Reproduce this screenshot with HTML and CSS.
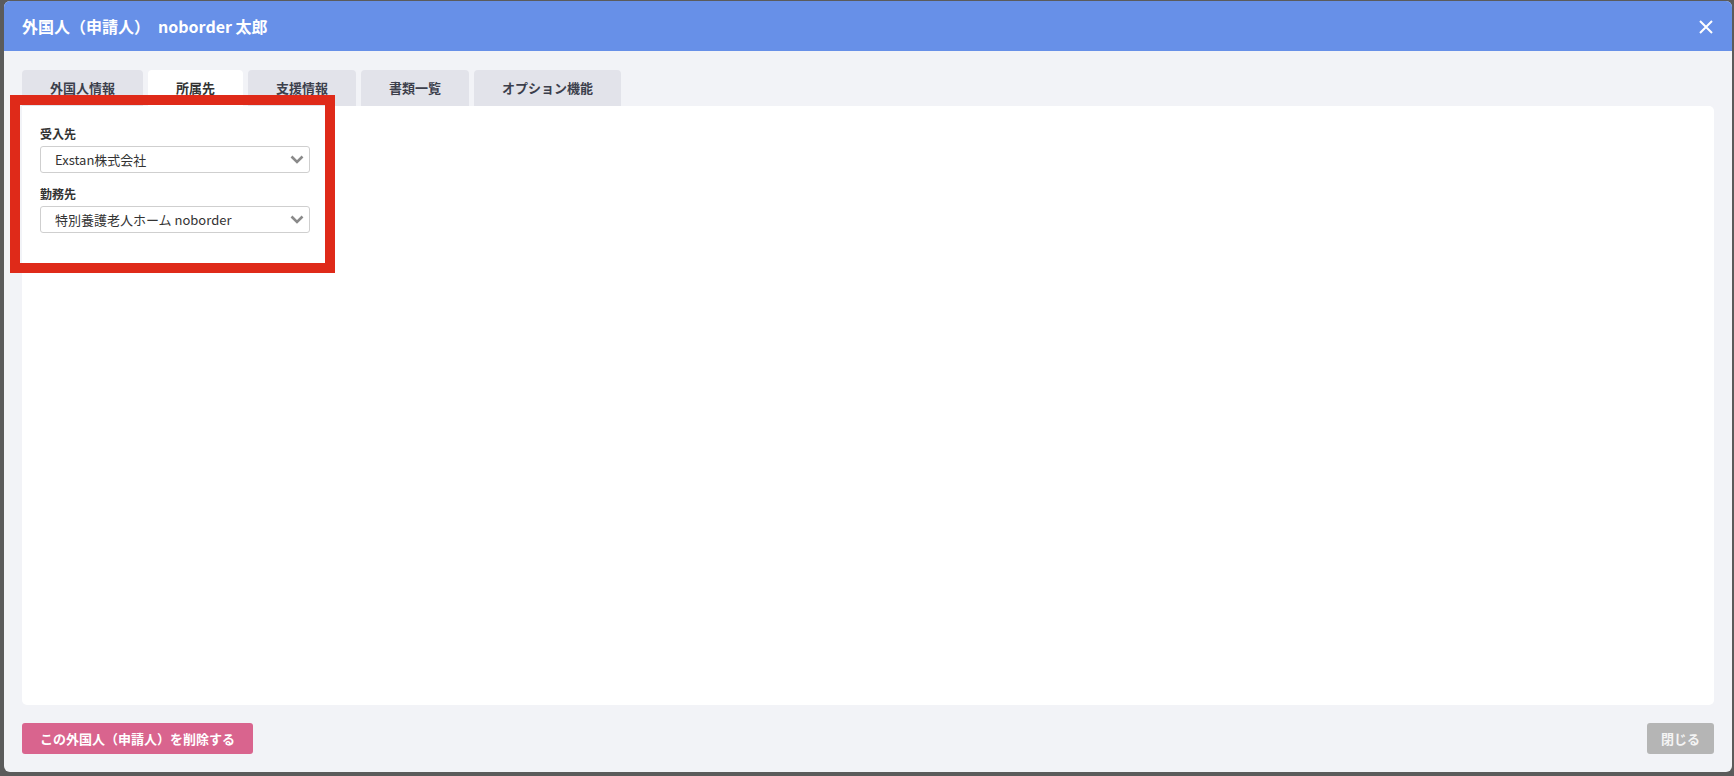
FILE: index.html
```html
<!DOCTYPE html>
<html lang="ja">
<head>
    <meta charset="UTF-8">
    <title>外国人（申請人）</title>
    <link rel="stylesheet" href="styles.css">
</head>
<body>
    <div class="modal">
        <div class="modal-header">
            <h2 class="modal-title">外国人（申請人）　noborder 太郎</h2>
            <button class="close-x" aria-label="close">
                <svg width="14" height="14" viewBox="0 0 14 14">
                    <path d="M1 1 L13 13 M13 1 L1 13" stroke="#fff" stroke-width="2" fill="none"/>
                </svg>
            </button>
        </div>

        <div class="modal-body">
            <div class="tabs">
                <div class="tab">外国人情報</div>
                <div class="tab active">所属先</div>
                <div class="tab">支援情報</div>
                <div class="tab">書類一覧</div>
                <div class="tab">オプション機能</div>
            </div>

            <div class="panel">
                <div class="field">
                    <label class="field-label">受入先</label>
                    <div class="select-box">
                        <span>Exstan株式会社</span>
                        <svg class="chevron" width="14" height="9" viewBox="0 0 14 9">
                            <path d="M1.5 1.5 L7 7 L12.5 1.5" stroke="#8a8a8a" stroke-width="2.6" fill="none"/>
                        </svg>
                    </div>
                </div>
                <div class="field">
                    <label class="field-label">勤務先</label>
                    <div class="select-box">
                        <span>特別養護老人ホーム noborder</span>
                        <svg class="chevron" width="14" height="9" viewBox="0 0 14 9">
                            <path d="M1.5 1.5 L7 7 L12.5 1.5" stroke="#8a8a8a" stroke-width="2.6" fill="none"/>
                        </svg>
                    </div>
                </div>
            </div>

            <div class="modal-footer">
                <button class="btn btn-delete">この外国人（申請人）を削除する</button>
                <button class="btn btn-close">閉じる</button>
            </div>
        </div>

        <!-- annotation box drawn over the form -->
        <div class="highlight"></div>
    </div>
</body>
</html>
```

FILE: styles.css
```css
* {
    box-sizing: border-box;
}

body {
    margin: 0;
    background-color: #5b5b5b;
    font-family: "Noto Sans CJK JP", "Noto Sans", sans-serif;
    color: #333;
}

.modal {
    position: relative;
    margin: 1px 2px 4px 4px;
    height: 771px;
    background-color: #f2f3f7;
    border-radius: 6px;
    display: flex;
    flex-direction: column;
    overflow: hidden;
}

.modal-header {
    height: 50px;
    background-color: #6790e8;
    display: flex;
    align-items: center;
    justify-content: space-between;
    padding: 0 18px 0 18px;
}

.modal-title {
    margin: 0;
    color: white;
    font-size: 16px;
    font-weight: bold;
}

.close-x {
    background: none;
    border: none;
    padding: 0;
    width: 14px;
    height: 14px;
    margin-top: 2px;
    margin-right: 1px;
}

.modal-body {
    flex: 1;
    display: flex;
    flex-direction: column;
    padding: 19px 18px 18px 18px;
}

.tabs {
    display: flex;
    gap: 5px;
    height: 36px;
}

.tab {
    background-color: #e2e3ea;
    border-radius: 4px 4px 0 0;
    padding: 0 28px;
    font-size: 13px;
    font-weight: bold;
    line-height: 36px;
    color: #3c3f4c;
}

.tab.active {
    background-color: white;
    color: #333;
}

.panel {
    flex: 1;
    background-color: white;
    border-radius: 0 5px 5px 5px;
    padding: 19px 18px;
}

.field {
    width: 270px;
    margin-bottom: 12px;
}

.field-label {
    display: block;
    font-size: 12px;
    font-weight: bold;
    line-height: 17px;
    margin-bottom: 4px;
}

.select-box {
    height: 27px;
    border: 1px solid #cfcfcf;
    border-radius: 3px;
    display: flex;
    align-items: center;
    justify-content: space-between;
    padding: 0 5px 0 14px;
    font-size: 13px;
    color: #333;
}

.chevron {
    display: block;
}

.modal-footer {
    display: flex;
    justify-content: space-between;
    margin-top: 18px;
}

.btn {
    height: 31px;
    border: none;
    border-radius: 3px;
    font-family: "Noto Sans CJK JP", "Noto Sans", sans-serif;
    font-size: 13px;
    font-weight: bold;
    color: white;
    padding: 0 18px;
}

.btn-delete {
    background-color: #d9648e;
}

.btn-close {
    background-color: #b5b5b5;
    color: #f4f4f4;
    padding: 0 14px;
}

.highlight {
    position: absolute;
    left: 6px;
    top: 94px;
    width: 325px;
    height: 178px;
    border: 10px solid #df2a19;
}
```
